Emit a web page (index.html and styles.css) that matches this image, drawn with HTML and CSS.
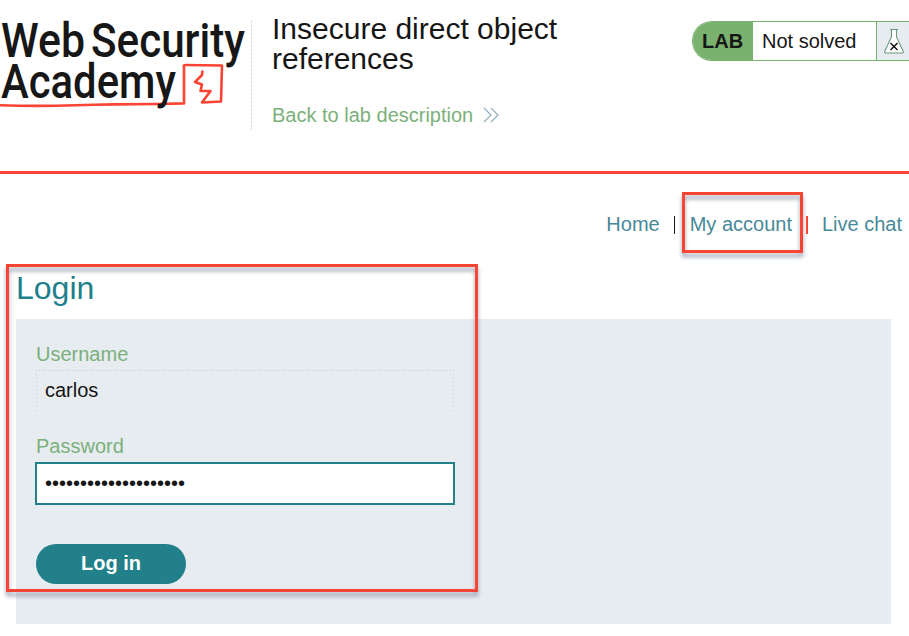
FILE: index.html
```html
<!DOCTYPE html>
<html lang="en">
<head>
<meta charset="utf-8">
<title>Insecure direct object references</title>
<link rel="stylesheet" href="styles.css">
</head>
<body>
<header class="header">
  <svg class="logo" width="252" height="130" viewBox="0 0 252 130" role="img" aria-label="Web Security Academy">
    <g class="logo-text">
      <text x="1" y="57" textLength="84" lengthAdjust="spacingAndGlyphs">Web</text>
      <text x="91" y="57" textLength="154" lengthAdjust="spacingAndGlyphs">Security</text>
    </g>
    <path class="logo-line" d="M0 105.3Q38 106.500 75 105.300T158 104L184 103.400V67Q183 65 186 65L222 65.500L221 101.500L202 102.500L210.500 91H200.500L202 84.500L195 82L202 75L202.500 70.500"/>
    <g class="logo-text">
      <text x="1" y="97.500" textLength="175" lengthAdjust="spacingAndGlyphs">Academy</text>
    </g>
  </svg>
  <div class="heading">
    <h1>Insecure direct object references</h1>
    <a class="back">Back to lab description
      <svg width="16" height="16" viewBox="0 0 16 16"><path d="M1 1l7 7-7 7M8 1l7 7-7 7"/></svg>
    </a>
  </div>
  <div class="status">
    <b class="lab">LAB</b>
    <span class="state">Not solved</span>
    <span class="flask"><svg width="20" height="26" viewBox="0 0 20 26"><path class="glass" d="M6 1.500H14M7.500 2V9L.7 23.500Q.5 25 2 25H18Q19.500 25 19.300 23.500L12.500 9V2"/><path class="cross" d="M6.500 15l7 7M13.500 15l-7 7"/></svg></span>
  </div>
</header>
<main>
  <nav>
    <a>Home</a><span class="sep"></span><a class="account">My account<span class="mark mark-account"></span></a><span class="sep sep-red"></span><a>Live chat</a>
  </nav>
  <section class="login">
    <h2>Login</h2>
    <form class="panel">
      <label>Username</label>
      <div class="field username">carlos</div>
      <label>Password</label>
      <div class="field password">••••••••••••••••••••</div>
      <button type="button">Log in</button>
    </form>
    <span class="mark mark-login"></span>
  </section>
</main>
</body>
</html>
```
FILE: styles.css
```css
* { box-sizing: border-box; }
body {
  margin: 0;
  height: 636px;
  overflow: hidden;
  background: #fff;
  color: #161616;
  font: 20px/24px "Liberation Sans", Arial, sans-serif;
}
h1, h2 { margin: 0; font-weight: 400; }
.header {
  display: flex;
  align-items: flex-start;
  height: 174px;
  border-bottom: 3px solid #fb4434;
}
.logo { flex: none; }
.logo-text { font: 500 48px Roboto, sans-serif; fill: #171717; }
.logo-line { fill: none; stroke: #fb4434; stroke-width: 2.6; stroke-linejoin: round; }
.heading {
  flex: none;
  width: 341px;
  margin-left: -1px;
  padding: 14px 0 0 21px;
  background: repeating-linear-gradient(#ccc 0 1px, #eee 1px 4px) 0 21px / 1px 109px no-repeat;
  height: 130px;
}
.heading h1 { font-size: 30px; line-height: 30px; }
.back { display: flex; align-items: center; gap: 10px; margin-top: 29px; color: #7bb07b; white-space: nowrap; }
.back svg { fill: none; stroke: #94aebf; stroke-width: 1.2; }
.status {
  display: flex;
  flex: none;
  width: 217px;
  height: 40px;
  margin: 21px 0 0 100px;
  border: 1px solid #79b16e;
  border-right: 0;
  border-radius: 20px 0 0 20px;
  overflow: hidden;
  line-height: 39px;
}
.lab { flex: none; width: 60px; padding-left: 9px; background: #79b16e; }
.state { flex: none; width: 123px; padding-left: 9px; }
.flask { flex: 1; padding: 6px 0 0 7px; border-left: 1px solid #79b16e; background: #e7ecf0; line-height: 0; }
.flask svg { fill: none; }
.glass { fill: #fff; stroke: #6d987d; stroke-width: 1.1; }
.cross { stroke: #161616; stroke-width: 1.5; }
nav { display: flex; align-items: center; justify-content: flex-end; height: 90px; padding: 12px 7px 2px 0; color: #478998; }
.sep { width: 1px; height: 18px; margin: 2px 15px 0 14px; background: #161616; }
.sep-red { width: 2px; margin: 2px 14px 0; background: #fb4434; }
.account { position: relative; }
.mark { position: absolute; border: 3px solid #fb4434; filter: drop-shadow(0 4px 2px #7d899dcc); }
.mark-account { left: -8px; top: -20px; width: 121px; height: 61px; }
.login { position: relative; padding: 6px 18px 0 16px; }
.login h2 { height: 49px; font-size: 32px; line-height: 37px; color: #21808a; }
.panel { height: 305px; padding: 23px 20px; background: #e7ecf0; }
.panel label { display: block; height: 28px; color: #7bb07b; }
.field { width: 418px; padding-left: 9px; }
.username {
  height: 41px;
  margin-bottom: 23px;
  line-height: 41px;
  background:
    repeating-linear-gradient(90deg, #c4c9cc 0 1px, transparent 1px 3px) 0 0 / 100% 1px no-repeat,
    repeating-linear-gradient(transparent 0 3px, #c4c9cc 3px 4px) 0 1px / 1px 40px no-repeat,
    repeating-linear-gradient(transparent 0 3px, #c4c9cc 3px 4px) 100% 1px / 1px 40px no-repeat;
}
.password { width: 420px; height: 43px; margin-left: -1px; padding-left: 8px; border: 2px solid #21808a; background: #fff; line-height: 39px; }
.panel button {
  display: block;
  width: 150px;
  height: 40px;
  margin-top: 39px;
  padding: 0 0 2px;
  border: 0;
  border-radius: 20px;
  background: #21808a;
  color: #fff;
  font: bold 20px "Liberation Sans", Arial, sans-serif;
}
.mark-login { left: 6px; top: 0; width: 472px; height: 328px; }
```
